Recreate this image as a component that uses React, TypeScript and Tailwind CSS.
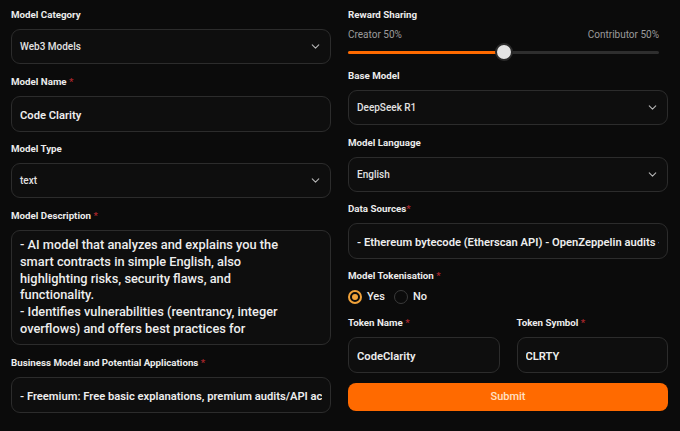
import { ChevronDown } from "lucide-react";
import type { ReactNode } from "react";

const font = { fontFamily: "Roboto, 'Noto Sans', sans-serif" };

function Label({ children, required, star = " *" }: { children: ReactNode; required?: boolean; star?: string }) {
  return (
    <p className="mb-[7px] h-[14px] text-[9.75px] leading-[14px] font-bold text-[#ececec]">
      {children}
      {required && <span className="text-[#a8262b]">{star}</span>}
    </p>
  );
}

function Select({ value }: { value: string }) {
  return (
    <div className="flex h-[35px] items-center justify-between rounded-[9px] border border-[#2c2c2c] bg-[#0e0e0e] pr-[8px] pl-[8px]">
      <span className="text-[10px] font-medium text-[#e2e2e2]">{value}</span>
      <ChevronDown size={13} strokeWidth={2} className="text-[#b5b5b5]" />
    </div>
  );
}

function Input({ value }: { value: string }) {
  return (
    <div className="flex h-[36px] items-center rounded-[9px] border border-[#2c2c2c] bg-[#0e0e0e] px-[8px]">
      <div className="min-w-0 flex-1 overflow-hidden">
        <span className="text-[11.2px] font-semibold whitespace-nowrap text-[#ededed]">{value}</span>
      </div>
    </div>
  );
}

export default function App() {
  return (
    <div style={font} className="h-[431px] w-[680px] overflow-hidden bg-[#0b0b0b]">
      <div className="grid grid-cols-[320px_320px] gap-[17px] pt-[8px] pl-[11px]">
        {/* left column */}
        <div className="flex flex-col">
          <Label>Model Category</Label>
          <Select value="Web3 Models" />
          <div className="h-[11px]" />
          <Label required>Model Name</Label>
          <Input value="Code Clarity" />
          <div className="h-[10px]" />
          <Label>Model Type</Label>
          <Select value="text" />
          <div className="h-[11px]" />
          <Label required>Model Description</Label>
          <div className="h-[115px] overflow-hidden rounded-[9px] border border-[#2c2c2c] bg-[#0e0e0e] px-[8px] pt-[6px]">
            <p className="text-[12.8px] leading-[16.8px] font-medium text-[#ededed]">
              - AI model that analyzes and explains you the
              <br />
              smart contracts in simple English, also
              <br />
              highlighting risks, security flaws, and
              <br />
              functionality.
              <br />
              - Identifies vulnerabilities (reentrancy, integer
              <br />
              overflows) and offers best practices for
            </p>
          </div>
          <div className="h-[11px]" />
          <Label required>Business Model and Potential Applications</Label>
          <Input value="- Freemium: Free basic explanations, premium audits/API access" />
        </div>

        {/* right column */}
        <div className="flex flex-col">
          <p className="mb-[6px] h-[14px] text-[9.75px] leading-[14px] font-bold text-[#ececec]">Reward Sharing</p>
          <div className="pr-[9px]">
            <div className="flex justify-between text-[10px] leading-[14px] text-[#9b9b9b]">
              <span>Creator 50%</span>
              <span>Contributor 50%</span>
            </div>
            <div className="relative h-[20px]">
              <div className="absolute top-[9px] right-0 left-0 h-[3px] rounded-full bg-[#2e2e2e]" />
              <div className="absolute top-[9px] left-0 h-[3px] w-1/2 rounded-full bg-[#ff6a00]" />
              <div className="absolute top-[1px] left-1/2 h-[18px] w-[18px] -translate-x-1/2 rounded-full border-[2px] border-[#2a2a2a] bg-[#e4e4e4]" />
            </div>
          </div>
          <div className="h-[7px]" />
          <Label>Base Model</Label>
          <Select value="DeepSeek R1" />
          <div className="h-[11px]" />
          <Label>Model Language</Label>
          <Select value="English" />
          <div className="h-[10px]" />
          <Label required star="*">Data Sources</Label>
          <Input value="- Ethereum bytecode (Etherscan API) - OpenZeppelin audits - Solidity docs" />
          <div className="h-[10px]" />
          <Label required>Model Tokenisation</Label>
          <div className="flex h-[14px] items-center gap-[5px] text-[11px] font-medium text-[#ededed]">
            <span className="flex h-[14px] w-[14px] items-center justify-center rounded-full border-[2px] border-[#f0a23a]">
              <span className="h-[6px] w-[6px] rounded-full bg-[#f0a23a]" />
            </span>
            <span>Yes</span>
            <span className="ml-[4px] h-[14px] w-[14px] rounded-full border-[1.5px] border-[#3a3a3a]" />
            <span>No</span>
          </div>
          <div className="h-[12px]" />
          <div className="grid grid-cols-2 gap-[17px]">
            <div className="flex flex-col">
              <Label required>Token Name</Label>
              <Input value="CodeClarity" />
            </div>
            <div className="flex flex-col">
              <Label required>Token Symbol</Label>
              <Input value="CLRTY" />
            </div>
          </div>
          <button className="mt-[10px] h-[28px] rounded-[8px] bg-[#ff6a00] text-[11px] font-medium text-[#ffe2c6]">
            Submit
          </button>
        </div>
      </div>
    </div>
  );
}
